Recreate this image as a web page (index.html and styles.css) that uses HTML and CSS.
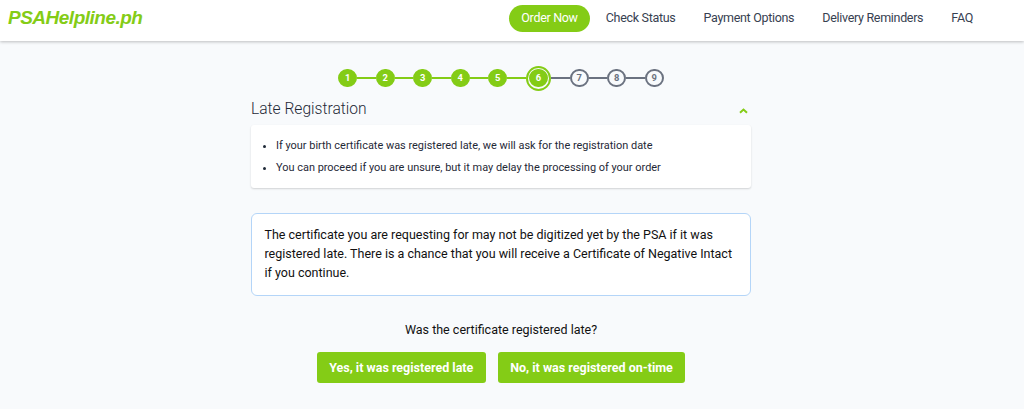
FILE: index.html
```html
<!DOCTYPE html>
<html lang="en">
<head>
  <meta charset="UTF-8">
  <meta name="viewport" content="width=device-width, initial-scale=1.0">
  <title>PSAHelpline.ph</title>
  <link rel="stylesheet" href="styles.css">
</head>
<body>

  <header class="header">
    <a class="logo" href="#">PSAHelpline.ph</a>
    <nav class="nav">
      <a class="active" href="#">Order Now</a>
      <a href="#">Check Status</a>
      <a href="#">Payment Options</a>
      <a href="#">Delivery Reminders</a>
      <a href="#">FAQ</a>
    </nav>
  </header>

  <main class="content">
    <div class="steps">
      <span class="step done">1</span>
      <span class="line done"></span>
      <span class="step done">2</span>
      <span class="line done"></span>
      <span class="step done">3</span>
      <span class="line done"></span>
      <span class="step done">4</span>
      <span class="line done"></span>
      <span class="step done">5</span>
      <span class="line done"></span>
      <span class="current"><span class="step done">6</span></span>
      <span class="line"></span>
      <span class="step">7</span>
      <span class="line"></span>
      <span class="step">8</span>
      <span class="line"></span>
      <span class="step">9</span>
    </div>

    <div class="title-row">
      <h1>Late Registration</h1>
      <svg class="chevron" viewBox="0 0 9 6"><path d="M1 4.8 L4.5 1.6 L8 4.8"/></svg>
    </div>

    <ul class="notes">
      <li>If your birth certificate was registered late, we will ask for the registration date</li>
      <li>You can proceed if you are unsure, but it may delay the processing of your order</li>
    </ul>

    <p class="notice">The certificate you are requesting for may not be digitized yet by the PSA if it was registered late. There is a chance that you will receive a Certificate of Negative Intact if you continue.</p>

    <p class="question">Was the certificate registered late?</p>

    <div class="buttons">
      <button type="button">Yes, it was registered late</button>
      <button type="button">No, it was registered on-time</button>
    </div>
  </main>

</body>
</html>
```
FILE: styles.css
```css
* {
  box-sizing: border-box;
}

body {
  margin: 0;
  font-family: Roboto, sans-serif;
  font-size: 12.5px;
  line-height: 18.75px;
  color: #111;
  background-color: #f8fafc;
}

.header {
  display: flex;
  justify-content: space-between;
  align-items: center;
  height: 41px;
  padding: 0 38.5px 4px 8px;
  background-color: #fff;
  box-shadow: 0 1px 3px rgba(0, 0, 0, 0.24);
}

.logo {
  font-family: "Liberation Sans", Arial, sans-serif;
  font-size: 19px;
  font-weight: bold;
  font-style: italic;
  letter-spacing: -0.5px;
  color: #84cc16;
  text-decoration: none;
}

.nav {
  display: flex;
  gap: 3.1px;
}

.nav a {
  padding: 4.3px 12.5px;
  border-radius: 14px;
  letter-spacing: -0.31px;
  color: #374151;
  text-decoration: none;
}

.nav .active {
  background-color: #84cc16;
  color: #fff;
}

.content {
  width: 500px;
  margin: 0 auto;
  padding-top: 24.5px;
  position: relative;
  left: -11px;
}

.steps {
  display: flex;
  justify-content: center;
  align-items: center;
}

.step {
  display: flex;
  justify-content: center;
  align-items: center;
  width: 18.75px;
  height: 18.75px;
  border: 2px solid #6b7280;
  border-radius: 50%;
  font-size: 9.4px;
  font-weight: bold;
  line-height: 1;
  color: #6b7280;
}

.step.done {
  border-color: #84cc16;
  background-color: #84cc16;
  color: #fff;
}

.current {
  padding: 1.2px;
  border: 2px solid #84cc16;
  border-radius: 50%;
}

.line {
  width: 18.75px;
  height: 2px;
  background-color: #6b7280;
}

.line.done {
  background-color: #84cc16;
}

.title-row {
  display: flex;
  justify-content: space-between;
  align-items: center;
  height: 34.6px;
  padding: 2px 3px 0 0;
}

h1 {
  margin: 0;
  font-size: 15.6px;
  font-weight: 300;
  color: #1f2937;
}

.chevron {
  width: 9px;
  height: 6px;
  margin-top: 5px;
  fill: none;
  stroke: #84cc16;
  stroke-width: 2;
}

.notes {
  margin: 0;
  padding: 12.5px 12.5px 12.5px 25px;
  border-radius: 3px;
  background-color: #fff;
  box-shadow: 0 1px 2px rgba(0, 0, 0, 0.16);
  font-size: 10.94px;
  line-height: 15.6px;
  color: #1f2937;
}

.notes li + li {
  margin-top: 6.25px;
}

.notice {
  margin: 25px 0;
  padding: 12.5px;
  border: 1px solid #b4d5f8;
  border-radius: 6px;
  background-color: #fff;
}

.question {
  margin: 0 0 12.5px;
  text-align: center;
}

.buttons {
  display: flex;
  justify-content: center;
  gap: 12.5px;
}

button {
  height: 31.25px;
  padding: 0 12.2px;
  border: none;
  border-radius: 3px;
  background-color: #84cc16;
  color: #fff;
  font-family: inherit;
  font-size: 12.5px;
  font-weight: bold;
  cursor: pointer;
}
```
